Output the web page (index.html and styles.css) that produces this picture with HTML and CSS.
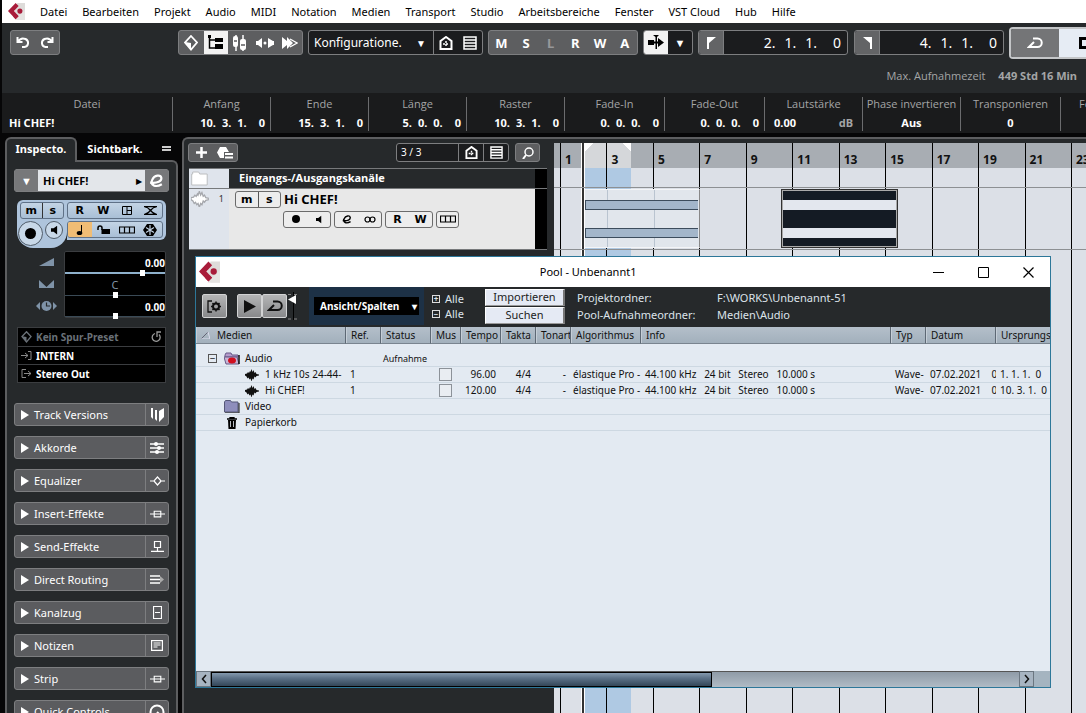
FILE: index.html
```
<!DOCTYPE html>
<html lang="de">
<head>
<meta charset="utf-8">
<title>Cubase – Unbenannt1</title>
<link rel="stylesheet" href="styles.css">
</head>
<body>
<svg class="defs" aria-hidden="true">
  <symbol id="logo" viewBox="0 0 20 20"><path d="M11 0h9v20h-9l-4-8z" fill="#dedcda"/><path d="M9 0L0 9.500 9 19l3.500-3.500L7 9.500 12.500 3.500z" fill="#a91c3a"/><path d="M8 20L20 8v12z" fill="#e6e4e2"/><path d="M9 19l3.500-3.500L10 13l-4 3z" fill="#a91c3a"/><circle cx="14" cy="9.500" r="3" fill="#a91c3a"/></symbol>
  <symbol id="house" viewBox="0 0 14 14"><path d="M1.500 5L7 1l5.500 4v8h-11z" fill="none" stroke="currentColor" stroke-width="2"/><path d="M7 5v6M4 8h6" stroke="currentColor" stroke-width="1.500" stroke-dasharray="2 1"/></symbol>
  <symbol id="list" viewBox="0 0 14 14"><path d="M1 1h12v12H1zM1 4h12M1 7h12M1 10h12" fill="none" stroke="currentColor" stroke-width="1.500"/></symbol>
  <symbol id="loop" viewBox="0 0 16 12"><path d="M6 1.500h4.500a4 4 0 0 1 0 8.500H2l5-5" fill="none" stroke="currentColor" stroke-width="2"/></symbol>
  <symbol id="wave" viewBox="0 0 14 12"><path d="M0 5l2-.5L3 3l1 1 1-2 .5 1L6.500 0l1 3L8.500 1l1 3 1-1 1 2 2.500.5v1l-2.500.5-1 1.500-1-1-1 3-1-1-1 3-1-3-1 1-1-2-1 1-1-2L0 6.500z" fill="currentColor"/></symbol>
  <symbol id="speaker" viewBox="0 0 8 10"><path d="M0 3h3l4-3v10L3 7H0z" fill="currentColor"/></symbol>
  <symbol id="lanes" viewBox="0 0 16 8"><path d="M.5 1h15v6H.5zM5.500 1v6M10.500 1v6" fill="none" stroke="currentColor" stroke-width="1.200"/></symbol>
  <symbol id="edit" viewBox="0 0 14 12"><path d="M1 7.500C8 8.500 12 6 11.500 3S5 0 3 5s3 7.500 9 4" fill="none" stroke="currentColor" stroke-width="2"/></symbol>
  <symbol id="insert" viewBox="0 0 16 10"><path d="M0 5h16M4.500 2h7v6h-7z" fill="none" stroke="currentColor" stroke-width="1.200"/></symbol>
  <symbol id="diamond" viewBox="0 0 14 16"><path d="M7 1l6 6.500-6 7-6-7z" fill="none" stroke="currentColor" stroke-width="1.800"/><path d="M1 7l6 1v7z" fill="currentColor"/></symbol>
</svg>

<nav class="menu">
  <svg class="menu-logo"><use href="#logo"/></svg>
  <a href="#">Datei</a><a href="#">Bearbeiten</a><a href="#">Projekt</a><a href="#">Audio</a><a href="#">MIDI</a><a href="#">Notation</a><a href="#">Medien</a><a href="#">Transport</a><a href="#">Studio</a><a href="#">Arbeitsbereiche</a><a href="#">Fenster</a><a href="#">VST Cloud</a><a href="#">Hub</a><a href="#">Hilfe</a>
</nav>

<header class="top">
  <div class="toolbar">
    <div class="group g50">
      <button aria-label="Rückgängig"><svg width="14" height="13" viewBox="0 0 14 13"><path d="M1.500 1v5h5M2 5.500C4 2.500 7 2 9.500 3c4 2 3 7.500-1 8H6" fill="none" stroke="currentColor" stroke-width="2"/></svg></button>
      <button aria-label="Wiederholen"><svg width="14" height="13" viewBox="0 0 14 13"><path d="M12.500 1v5h-5M12 5.500C10 2.500 7 2 4.500 3c-4 2-3 7.500 1 8H8" fill="none" stroke="currentColor" stroke-width="2"/></svg></button>
    </div>
    <div class="group zones">
      <button aria-label="Projektzone"><svg width="14" height="16"><use href="#diamond"/></svg></button>
      <button class="on" aria-label="Inspector"><svg width="16" height="16" viewBox="0 0 16 16"><path d="M1.500 0v13H7M1.500 5H7" fill="none" stroke="currentColor" stroke-width="1.500"/><path d="M0 0h3v3H0zM7 3h8v4H7zM7 9h8v5H7z" fill="currentColor"/></svg></button>
      <button aria-label="Mixer"><svg width="14" height="16" viewBox="0 0 14 16"><path d="M3 0v16M10 0v16" stroke="currentColor" stroke-width="1.500"/><rect x="0" y="1" width="5" height="11" rx="2" fill="currentColor"/><rect x="7" y="4" width="6" height="11" rx="2" fill="currentColor"/><path d="M1 6h3M8 10h4" stroke="#5d5e60" stroke-width="1.500"/></svg></button>
      <button aria-label="Audio"><svg width="18" height="10" viewBox="0 0 18 10"><path d="M0 3h2l4-3v10L2 7H0zM18 3h-1l-5-3v10l5-3h1z" fill="currentColor"/><circle cx="9" cy="5" r="1.500" fill="currentColor"/></svg></button>
      <button aria-label="Scrub"><svg width="16" height="12" viewBox="0 0 16 12"><path d="M0 0l5 4V0l6 6-6 6V8l-5 4z" fill="currentColor"/><path d="M8 2l7 4-7 4" fill="none" stroke="currentColor" stroke-width="1.300"/></svg></button>
    </div>
    <div class="group dark g175">
      <button class="config">Konfiguratione. <span>▼</span></button>
      <button class="sep" aria-label="Sichtbarkeit"><svg width="14" height="14"><use href="#house"/></svg></button>
      <button aria-label="Liste"><svg width="14" height="14"><use href="#list"/></svg></button>
    </div>
    <div class="group letters">
      <button>M</button><button>S</button><button class="dim">L</button><button>R</button><button>W</button><button>A</button>
    </div>
    <div class="group dark g50">
      <button class="on" aria-label="Auto-Scroll"><svg width="16" height="16" viewBox="0 0 16 16"><path d="M5 0h6L9 2v12h-1.500V2zM0 5h6v5H0zM10 3l6 4.500-6 4.500z" fill="currentColor"/><path d="M6 7.500h5" stroke="currentColor" stroke-width="2"/></svg></button>
      <button aria-label="Menü">▼</button>
    </div>
    <div class="group dark time">
      <button class="grey" aria-label="Linker Locator"><svg width="9" height="12" viewBox="0 0 9 12"><path d="M0 0h9L2 6v6H0z" fill="currentColor"/></svg></button>
      <div class="digits"><span>2.</span><span>1.</span><span>1.</span><span>0</span></div>
    </div>
    <div class="group dark time">
      <button class="grey" aria-label="Rechter Locator"><svg width="9" height="12" viewBox="0 0 9 12"><path d="M9 0H0l7 6v6h2z" fill="currentColor"/></svg></button>
      <div class="digits"><span>4.</span><span>1.</span><span>1.</span><span>0</span></div>
    </div>
    <div class="transport">
      <button class="cycle" aria-label="Cycle"><svg width="16" height="12"><use href="#loop"/></svg></button>
      <button class="stop" aria-label="Stop"><i></i></button>
    </div>
  </div>
  <div class="rectime"><span>Max. Aufnahmezeit</span><b>449 Std 16 Min</b></div>
</header>

<section class="info">
  <div class="file"><span>Datei</span><b class="left">Hi CHEF!</b></div>
  <div><span>Anfang</span><b class="pos"><i>10.</i><i>3.</i><i>1.</i><i>0</i></b></div>
  <div><span>Ende</span><b class="pos"><i>15.</i><i>3.</i><i>1.</i><i>0</i></b></div>
  <div><span>Länge</span><b class="pos"><i>5.</i><i>0.</i><i>0.</i><i>0</i></b></div>
  <div><span>Raster</span><b class="pos"><i>10.</i><i>3.</i><i>1.</i><i>0</i></b></div>
  <div class="wide"><span>Fade-In</span><b class="pos"><i>0.</i><i>0.</i><i>0.</i><i>0</i></b></div>
  <div class="wide"><span>Fade-Out</span><b class="pos"><i>0.</i><i>0.</i><i>0.</i><i>0</i></b></div>
  <div><span>Lautstärke</span><b class="gain">0.00<em>dB</em></b></div>
  <div><span>Phase invertieren</span><b>Aus</b></div>
  <div class="wide"><span>Transponieren</span><b>0</b></div>
  <div class="fine"><span>Fe</span></div>
</section>

<main class="work">
  <aside class="inspector">
    <div class="tabs"><button class="tab active">Inspecto.</button><button class="tab">Sichtbark.</button><button class="burger" aria-label="Menü"></button></div>
    <div class="panel">
      <div class="track-head"><button aria-label="Auf">▼</button><strong>Hi CHEF!</strong><span class="arrow">▶</span><button aria-label="Bearbeiten"><svg width="15" height="14"><use href="#edit"/></svg></button></div>

      <div class="blue">
        <div class="blue-left">
          <div class="pill"><button>m</button><button>s</button></div>
          <div class="rounds"><button class="rec" aria-label="Aufnahme"><i></i></button><button class="mon" aria-label="Monitor"><svg width="7" height="10"><use href="#speaker"/></svg></button></div>
        </div>
        <div class="blue-right">
          <div class="pill"><button>R</button><button>W</button>
            <button aria-label="Spuren"><svg width="10" height="9" viewBox="0 0 10 9"><path d="M.5.5h9v8h-9zM5 .5v8M5 4.500h4" fill="none" stroke="currentColor"/></svg></button>
            <button aria-label="Fades"><svg width="13" height="9" viewBox="0 0 13 9"><path d="M0 .7h13M0 8.300h13M1 8C6 8 7 1 12 1M1 1c5 0 6 7 11 7" fill="none" stroke="currentColor" stroke-width="1.200"/></svg></button></div>
          <div class="pill"><button class="orange" aria-label="Zeitbasis"><svg width="7" height="10" viewBox="0 0 7 10"><path d="M5.500 0v8" stroke="currentColor"/><ellipse cx="3.500" cy="8" rx="2.800" ry="2" fill="currentColor"/></svg></button>
            <button aria-label="Sperren"><svg width="13" height="9" viewBox="0 0 13 9"><path d="M1 5V3a2 2 0 0 1 4 0v2" fill="none" stroke="currentColor" stroke-width="1.500"/><path d="M4.500 4H13v5H4.500z" fill="currentColor"/></svg></button>
            <button aria-label="Lanes"><svg width="16" height="8"><use href="#lanes"/></svg></button>
            <button aria-label="Einfrieren"><svg width="14" height="12" viewBox="0 0 14 12"><path d="M4 0h6l4 6-4 6H4L0 6z" fill="currentColor"/><path d="M7 1v10M3 3.500l8 5M11 3.500l-8 5" stroke="#bfd0e2" stroke-width="1.200"/></svg></button></div>
        </div>
      </div>

      <div class="levels">
        <div class="level-icons">
          <svg width="15" height="8" viewBox="0 0 15 8"><path d="M0 8L15 0v8z" fill="#7f93a8"/></svg>
          <svg width="15" height="8" viewBox="0 0 15 8"><path d="M0 0l7.500 7L15 0v8H0z" fill="#7f93a8"/></svg>
          <svg width="21" height="10" viewBox="0 0 21 10"><path d="M4 1v8L0 5zM17 1v8l4-4z" fill="#7f93a8"/><circle cx="10.500" cy="5" r="5" fill="#7f93a8"/><path d="M10.500 1.500V5H14" fill="none" stroke="#26292b" stroke-width="1.200"/></svg>
        </div>
        <div class="level-box">
          <div class="fader volume"><b>0.00</b><i></i></div>
          <div class="fader pan"><span>C</span><i></i></div>
          <div class="fader delay"><b>0.00</b><i></i></div>
        </div>
      </div>

      <ul class="routing">
        <li class="muted"><svg width="11" height="12"><use href="#diamond"/></svg><b>Kein Spur-Preset</b><svg class="reload" width="11" height="12" viewBox="0 0 11 12"><path d="M4 2.500a4 4 0 1 0 4 1M6 6V1h4" fill="none" stroke="currentColor" stroke-width="1.300"/></svg></li>
        <li><svg width="11" height="9" viewBox="0 0 11 9"><path d="M0 4.500h7M4 2l3 2.500L4 7M7 .5h3v8H7" fill="none" stroke="#888" /></svg><b>INTERN</b></li>
        <li><svg width="11" height="9" viewBox="0 0 11 9"><path d="M3 4.500h7M7 2l3 2.500L7 7M5 .5H1v8h4" fill="none" stroke="#888"/></svg><b>Stereo Out</b></li>
      </ul>

      <div class="sections">
        <button><span>Track Versions</span><i><svg width="15" height="14" viewBox="0 0 15 14"><path d="M1 0h2v11L1 9zM5 2h2v11l-2-2zM9 3l5-3v9l-5 5z" fill="currentColor"/></svg></i></button>
        <button><span>Akkorde</span><i><svg width="14" height="12" viewBox="0 0 14 12"><path d="M0 2h14M0 6h14M0 10h14" stroke="currentColor" stroke-width="1.300"/><circle cx="6" cy="2" r="2" fill="currentColor"/><circle cx="9" cy="6" r="2" fill="currentColor"/><circle cx="7" cy="10" r="2" fill="currentColor"/></svg></i></button>
        <button><span>Equalizer</span><i><svg width="15" height="10" viewBox="0 0 15 10"><path d="M0 5h4l3.500-4L11 5h4M4 5l3.500 4L11 5" fill="none" stroke="currentColor" stroke-width="1.200"/></svg></i></button>
        <button><span>Insert-Effekte</span><i><svg width="15" height="10"><use href="#insert"/></svg></i></button>
        <button><span>Send-Effekte</span><i><svg width="13" height="11" viewBox="0 0 13 11"><path d="M3.500.5h6v6h-6zM6.500 6.500v4M0 10.300h13" fill="none" stroke="currentColor" stroke-width="1.200"/></svg></i></button>
        <button><span>Direct Routing</span><i><svg width="14" height="9" viewBox="0 0 14 9"><path d="M0 1h10M0 4.500h12M0 8h10" stroke="currentColor" stroke-width="1.300"/><path d="M10 1l4 3.500L10 8z" fill="#aaa"/></svg></i></button>
        <button><span>Kanalzug</span><i><svg width="9" height="13" viewBox="0 0 9 13"><path d="M.5.5h8v12h-8zM2 6.500h5" fill="none" stroke="currentColor" stroke-width="1.200"/></svg></i></button>
        <button><span>Notizen</span><i><svg width="12" height="11" viewBox="0 0 12 11"><path d="M.6.6h10.800v9.800H.6zM2.500 3h7M2.500 5h7M2.500 7h4" fill="none" stroke="currentColor" stroke-width="1.200"/></svg></i></button>
        <button><span>Strip</span><i><svg width="15" height="10"><use href="#insert"/></svg></i></button>
        <button><span>Quick Controls</span><i><svg width="16" height="16" viewBox="0 0 16 16"><circle cx="8" cy="8" r="6.500" fill="none" stroke="currentColor" stroke-width="2"/><path d="M8 8l4 4" stroke="currentColor" stroke-width="2"/></svg></i></button>
      </div>
    </div>
  </aside>

  <section class="project">
    <div class="tracks">
      <div class="track-tools">
        <div class="group g50"><button aria-label="Spur hinzufügen"><svg width="11" height="11" viewBox="0 0 11 11"><path d="M5.500 0v11M0 5.500h11" stroke="currentColor" stroke-width="2.500"/></svg></button><button aria-label="Preset"><svg width="16" height="12" viewBox="0 0 16 12"><path d="M3 0h6l3 5H7v6H3L0 5.500z" fill="currentColor"/><path d="M8 7h8M8 10.500h8" stroke="currentColor" stroke-width="2"/></svg></button></div>
        <div class="group dark filter"><span class="count">3 / 3</span><button class="sep" aria-label="Sichtbarkeit"><svg width="13" height="13"><use href="#house"/></svg></button><button class="sep" aria-label="Liste"><svg width="13" height="13"><use href="#list"/></svg></button></div>
        <div class="group find"><button aria-label="Suchen"><svg width="12" height="12" viewBox="0 0 12 12"><circle cx="7" cy="5" r="4" fill="none" stroke="currentColor" stroke-width="1.500"/><path d="M4 8l-3 4" stroke="currentColor" stroke-width="2"/></svg></button></div>
      </div>
      <div class="track folder"><div class="gutter"><svg width="17" height="15" viewBox="0 0 17 15"><path d="M.7 13V3h1V1h6l1 2h7.500v11H.7z" fill="#fff" stroke="#bcbec0"/></svg></div><strong>Eingangs-/Ausgangskanäle</strong></div>
      <div class="track audio">
        <div class="gutter"><svg class="track-wave" width="18" height="16"><use href="#wave"/></svg><span>1</span></div>
        <div class="track-body">
          <div class="row"><div class="pill"><button>m</button><button>s</button></div><strong>Hi CHEF!</strong></div>
          <div class="row second">
            <div class="pill"><button aria-label="Aufnahme"><i class="dot"></i></button><button aria-label="Monitor"><svg width="6" height="9"><use href="#speaker"/></svg></button></div>
            <div class="pill"><button aria-label="Bearbeiten"><svg width="10" height="9"><use href="#edit"/></svg></button><button aria-label="Stereo"><svg width="12" height="7" viewBox="0 0 12 7"><circle cx="3.500" cy="3.500" r="2.500" fill="none" stroke="currentColor" stroke-width="1.200"/><circle cx="8.500" cy="3.500" r="2.500" fill="none" stroke="currentColor" stroke-width="1.200"/></svg></button></div>
            <div class="pill"><button>R</button><button>W</button></div>
            <div class="pill"><button class="one" aria-label="Lanes"><svg width="16" height="8"><use href="#lanes"/></svg></button></div>
          </div>
        </div>
      </div>
    </div>

    <div class="timeline">
      <div class="lane first"></div><div class="lane second"></div>
      <div class="range"></div>
      <div class="bars"><span>1</span><span>3</span><span>5</span><span>7</span><span>9</span><span>11</span><span>13</span><span>15</span><span>17</span><span>19</span><span>21</span><span class="last">23</span></div>
      <div class="cursor"></div>
      <div class="clip light"><i></i><i></i></div>
      <div class="clip selected"><i></i><i></i></div>
    </div>
  </section>
</main>

<section class="pool">
  <div class="title">
    <svg class="pool-logo"><use href="#logo"/></svg>
    <h1>Pool - Unbenannt1</h1>
    <div class="win-buttons">
      <button aria-label="Minimieren"><svg width="11" height="11" viewBox="0 0 11 11"><path d="M0 5.500h11" stroke="#000"/></svg></button>
      <button aria-label="Maximieren"><svg width="11" height="11" viewBox="0 0 11 11"><path d="M.5.5h10v10H.5z" fill="none" stroke="#000"/></svg></button>
      <button aria-label="Schließen"><svg width="11" height="11" viewBox="0 0 11 11"><path d="M.5.5l10 10M10.500.5l-10 10" stroke="#000" stroke-width="1.200"/></svg></button>
    </div>
  </div>
  <div class="pool-tools">
    <button class="metal" aria-label="Einstellungen"><svg width="15" height="13" viewBox="0 0 15 13"><path d="M5 1H1v11h4" fill="none" stroke="#111" stroke-width="1.300"/><circle cx="9" cy="6.500" r="3" fill="none" stroke="#111" stroke-width="2"/><path d="M9 1.500v2M9 9.500v2M4 6.500h2M12 6.500h2M5.500 3l1.500 1.500M12.500 3L11 4.500M5.500 10L7 8.500M12.500 10L11 8.500" stroke="#111" stroke-width="1.500"/></svg></button>
    <div class="play"><button class="metal" aria-label="Wiedergabe"><svg width="12" height="13" viewBox="0 0 12 13"><path d="M0 0l12 6.500L0 13z" fill="#111"/></svg></button><button class="metal" aria-label="Loop"><svg width="16" height="12"><use href="#loop"/></svg></button></div>
    <svg class="slider" width="11" height="28" viewBox="0 0 11 28"><path d="M6.500 0v28" stroke="#000"/><path d="M1 2.500h9M1 27h9" stroke="#888" stroke-dasharray="3 3"/><path d="M9 3v9L1 7.500z" fill="#fff"/></svg>
    <div class="view"><button>Ansicht/Spalten <span>▾</span></button></div>
    <div class="all"><button><i>+</i>Alle</button><button><i>−</i>Alle</button></div>
    <div class="actions"><button>Importieren</button><button>Suchen</button></div>
    <dl><dt>Projektordner:</dt><dd>F:\WORKS\Unbenannt-51</dd><dt>Pool-Aufnahmeordner:</dt><dd>Medien\Audio</dd></dl>
  </div>
  <div class="pool-list">
    <table>
      <colgroup><col class="w150"><col class="w35"><col class="w50"><col class="w30"><col class="w40"><col class="w35"><col class="w35"><col class="w70"><col class="w250"><col class="w35"><col class="w70"><col></colgroup>
      <thead><tr><th class="media"><svg width="9" height="7" viewBox="0 0 9 7"><path d="M0 7l7-7" stroke="#667"/><path d="M7 0l2 7H0" fill="none" stroke="#dde"/></svg>Medien</th><th>Ref.</th><th>Status</th><th>Mus</th><th>Tempo</th><th>Takta</th><th>Tonart</th><th>Algorithmus</th><th>Info</th><th>Typ</th><th>Datum</th><th>Ursprungs</th></tr></thead>
      <tbody>
        <tr class="spacer"><td colspan="12"></td></tr>
        <tr><td><div class="node root"><i class="fold">−</i><svg width="16" height="13" viewBox="0 0 16 13"><path d="M1 3l1-2h5l1 2h6v2H1z" fill="#b49bcb" stroke="#665a88"/><path d="M0 5h13l2 7H2z" fill="#cbb4d4" stroke="#665a88"/><path d="M15 3v9" stroke="#111" stroke-width="1.500"/><ellipse cx="8" cy="8.500" rx="4" ry="3" fill="#d01020"/></svg>Audio</div></td><td></td><td class="small">Aufnahme</td><td colspan="9"></td></tr>
        <tr><td><div class="node leaf"><svg width="14" height="12"><use href="#wave"/></svg>1 kHz 10s 24-44-</div></td><td>1</td><td></td><td><input type="checkbox" aria-label="Musik-Modus 1"></td><td class="num">96.00</td><td class="num">4/4</td><td class="num">-</td><td class="algo">élastique Pro -</td><td class="pre">44.100 kHz   24 bit   Stereo   10.000 s</td><td>Wave-</td><td class="pre">07.02.2021    0</td><td class="pre">1. 1. 1.  0</td></tr>
        <tr><td><div class="node leaf"><svg width="14" height="12"><use href="#wave"/></svg>Hi CHEF!</div></td><td>1</td><td></td><td><input type="checkbox" aria-label="Musik-Modus 2"></td><td class="num">120.00</td><td class="num">4/4</td><td class="num">-</td><td class="algo">élastique Pro -</td><td class="pre">44.100 kHz   24 bit   Stereo   10.000 s</td><td>Wave-</td><td class="pre">07.02.2021    0</td><td class="pre">10. 3. 1.  0</td></tr>
        <tr><td><div class="node"><svg width="16" height="13" viewBox="0 0 16 13"><path d="M.5 12V2l1-1.500h5L7.500 2H14v10z" fill="#8e8ebc" stroke="#555878"/><path d="M15 3v10H1" fill="none" stroke="#111"/></svg>Video</div></td><td colspan="11"></td></tr>
        <tr><td><div class="node"><svg width="16" height="12" viewBox="0 0 16 12"><path d="M3 2h10M6 2V.7h4V2" fill="none" stroke="#000" stroke-width="1.300"/><path d="M4 3h8l-.5 9h-7z" fill="#000"/><path d="M6.500 4v6M9.500 4v6" stroke="#e3eaf2" stroke-width=".8"/></svg>Papierkorb</div></td><td colspan="11"></td></tr>
      </tbody>
    </table>
  </div>
  <div class="scroll"><button aria-label="Nach links"><svg width="6" height="10" viewBox="0 0 6 10"><path d="M5 1L1.500 5 5 9" fill="none" stroke="#111" stroke-width="1.500"/></svg></button><div class="trough"><div class="thumb"></div></div><button aria-label="Nach rechts"><svg width="6" height="10" viewBox="0 0 6 10"><path d="M1 1l3.500 4L1 9" fill="none" stroke="#111" stroke-width="1.500"/></svg></button></div>
</section>
</body>
</html>
```
FILE: styles.css
```
* { box-sizing: border-box; }
body { margin: 0; height: 100vh; padding-left: 2px; overflow: hidden; display: flex; flex-direction: column; position: relative; background: #060607; color: #fff; font: 11px/16px "Noto Sans", "Open Sans", sans-serif; }
button { font: inherit; color: inherit; background: none; border: 0; padding: 0; margin: 0; display: flex; align-items: center; justify-content: center; }
svg { flex: none; display: block; }
i { font-style: normal; }
.defs { position: absolute; width: 0; height: 0; }

/* Menu */
.menu { flex: none; height: 23px; background: #fff; display: flex; align-items: center; gap: 15px; padding-left: 6px; white-space: nowrap; }
.menu a { color: #000; text-decoration: none; }
.menu-logo { width: 17px; height: 17px; }

/* Toolbar */
.top { flex: none; height: 70px; background: #26292b; overflow: hidden; }
.toolbar { display: flex; align-items: center; gap: 5px; height: 39px; padding-left: 8px; }
.group { flex: none; display: flex; height: 25px; border: 1px solid #7d7e80; border-radius: 3px; background: #5d5e60; overflow: hidden; }
.group button { flex: 1 1 0; height: 100%; }
.group.dark { background: #1b1c1e; }
.group .on { background: #f2f2f2; color: #000; }
.group .sep { border-left: 1px solid #7d7e80; }
.g50 { width: 50px; }
.g175 { width: 175px; }
.zones { width: 125px; margin-left: 113px; }
.group .config { flex: none; width: 124px; font-size: 12px; justify-content: space-between; padding: 0 7px 0 5px; }
.config span { font-size: 10px; }
.letters { width: 150px; font: bold 13px/16px "Noto Sans", sans-serif; }
.dim { color: #97989a; }
.group .grey { flex: none; width: 25px; background: #636466; border-right: 1px solid #7d7e80; }
.time { width: 150px; }
.time + .time { margin-left: 1px; }
.digits { flex: 1; display: flex; justify-content: flex-end; align-items: center; gap: 9px; padding-right: 6px; font-size: 14px; }
.digits span:last-child { margin-left: 7px; }
.transport { flex: 1 0 90px; display: flex; height: 32px; border: 2px solid #c4c6c8; border-radius: 4px; overflow: hidden; }
.cycle { width: 48px; background: #747577; }
.transport .stop { flex: 1; background: #e6ecf4; justify-content: flex-start; padding-left: 20px; }
.stop i { width: 12px; height: 12px; border: 3px solid #000; flex: none; }
.rectime { display: flex; justify-content: flex-end; gap: 13px; padding: 6px 9px 0 0; color: #a4a5a6; }
.rectime span, .info span { font-family: "Open Sans", sans-serif; }

/* Info line */
.info { flex: none; height: 40px; background: #1a1b1c; display: flex; text-align: center; overflow: hidden; }
.info > div { flex: none; width: 98px; border-left: 1px solid #6b6c6e; margin: 4px 0 2px; line-height: 14px; }
.info > .file { width: 170px; border: 0; }
.info > .wide { width: 100px; }
.info > .fine { flex: 1 0 25px; padding-left: 18px; text-align: left; overflow: hidden; }
.info span { display: block; color: #a4a5a6; }
.info b { display: block; margin-top: 5px; padding: 0 5px; }
.info .left { text-align: left; padding-left: 7px; }
.info .pos { display: flex; justify-content: flex-end; gap: 6px; padding-left: 0; }
.pos i:last-child { margin-left: 6px; }
.info .gain { display: flex; justify-content: space-between; padding: 0 9px; }
.gain em { font-style: normal; color: #a4a5a6; }

.work { flex: 1; min-height: 0; display: flex; padding: 4px 0 0 3px; gap: 4px; }

/* Inspector */
.inspector { flex: none; width: 173px; display: flex; flex-direction: column; }
.tabs { flex: none; display: flex; height: 23px; position: relative; z-index: 1; }
.tab { width: 72px; font-weight: bold; }
.tab.active { height: 25px; background: #26292b; border: 2px solid #5d5e60; border-bottom: 0; border-radius: 6px 6px 0 0; padding-bottom: 4px; }
.tab:nth-child(2) { width: 76px; }
.burger { width: 9px; height: 5px; border: solid #ccc; border-width: 2px 0; margin: 9px 0 0 9px; }
.panel { flex: 1; min-height: 0; overflow: hidden; border: 2px solid #5d5e60; border-bottom: 0; border-radius: 0 6px 0 0; background: #26292b; padding: 7px 7px 0; }
.track-head { display: flex; height: 23px; align-items: stretch; border: 1px solid #7d7e80; border-radius: 3px; background: #e3e6ea; color: #000; }
.track-head button { width: 23px; background: #77787a; color: #fff; }
.track-head strong { flex: 1; padding: 3px 0 0 5px; font-family: "Open Sans", sans-serif; }
.track-head .arrow { font-size: 8px; padding: 3px 3px 0 0; }
.pill { display: flex; border: 1px solid #5f7187; border-radius: 3px; font: bold 11px/13px "DejaVu Sans", sans-serif; overflow: hidden; }
.pill button { flex: 1; height: 100%; }
.blue { display: flex; margin: 8px 3px 0; color: #000; }
.blue-left { width: 50px; background: #aec4dc; border-radius: 6px 0 16px 16px; padding: 2px 3px; height: 48px; }
.blue-right { flex: 1; background: #aec4dc; border-radius: 0 6px 6px 0; padding: 2px 3px 2px 0; height: 40px; }
.blue .pill { height: 17px; background: linear-gradient(#c3d4e5, #a9bfd6); }
.blue-left .pill button + button { border-left: 1px solid #333; }
.blue-right .pill + .pill { margin-top: 2px; }
.orange { background: #f0bd75; }
.rounds { display: flex; gap: 2px; margin-top: 2px; }
.rounds button { border: 1px solid #4f5b68; border-radius: 50%; background: #c8d8e8; flex: none; }
.rounds .rec { width: 25px; height: 25px; margin-left: -2px; }
.mon { width: 18px; height: 18px; }
.rec i { width: 11px; height: 11px; border-radius: 50%; background: #000; }
.levels { display: flex; justify-content: flex-end; gap: 7px; margin: 3px 3px 0 0; }
.level-icons { display: grid; grid-template-rows: repeat(3, 22px); align-items: center; justify-items: center; }
.level-box { width: 102px; background: #000; border: 1px solid #3b3d40; border-radius: 2px; }
.fader { height: 22px; position: relative; text-align: right; border-bottom: 1px solid #3a4a56; line-height: 21px; }
.fader b { font-size: 10px; }
.fader i { position: absolute; width: 5px; height: 6px; background: #fff; bottom: -3px; left: 48px; }
.fader.pan { text-align: center; color: #8093a4; }
.fader.volume { border-bottom: 2px solid #8eb0cb; }
.fader.volume i { left: 75px; bottom: -4px; }
.fader.delay { height: 21px; }
.routing { list-style: none; margin: 9px 3px 0; padding: 0; background: #000; border: 1px solid #3b3d40; }
.routing li { display: flex; align-items: center; gap: 4px; height: 18px; padding: 0 3px; font-size: 10px; }
.routing li + li { border-top: 1px solid #3b3d40; }
.routing .muted { color: #6a7178; }
.routing .reload { margin-left: auto; color: #999; }
.sections { display: grid; gap: 10px; margin-top: 20px; }
.sections button { height: 23px; border: 1px solid #7d7e80; border-radius: 3px; background: #5b5c5f; justify-content: space-between; }
.sections span { flex: 1; text-align: left; display: flex; align-items: center; gap: 5px; white-space: nowrap; }
.sections span::before { content: ""; border: solid transparent; border-width: 5px 0 5px 8px; border-left-color: #fff; margin-left: 6px; }
.sections i { width: 23px; height: 100%; border-left: 1px solid #7d7e80; display: flex; align-items: center; justify-content: center; }

/* Track list */
.project { flex: 1; min-width: 0; display: flex; border: 2px solid #5d5e60; border-width: 2px 0 0 2px; border-radius: 6px 0 0 0; background: #26292b; padding: 4px 0 0 5px; overflow: hidden; }
.tracks { flex: none; width: 365px; padding-right: 7px; }
.track-tools { display: flex; height: 25px; margin: 0 7px 0 -1px; }
.track-tools .group { height: 19px; }
.filter { width: 113px; margin-left: auto; }
.find { width: 25px; margin-left: 6px; }
.count { width: 61px; padding-left: 4px; line-height: 17px; font-size: 10px; }
.track { display: flex; border-top: 1px solid #77797b; padding-right: 12px; background: linear-gradient(#000, #000) right / 12px 100% no-repeat; }
.track .gutter { flex: none; width: 40px; background: #dfe4ec; display: flex; padding: 2px 0 0 2px; }
.folder { height: 20px; }
.folder strong { flex: 1; background: #26292b; padding-left: 10px; line-height: 18px; font-family: "Open Sans", sans-serif; }
.audio { height: 62px; border-bottom: 1px solid #77797b; color: #000; }
.audio .gutter { justify-content: space-between; padding-right: 5px; }
.track-wave { color: #fff; stroke: #a5a7ac; stroke-width: 1px; }
.audio .gutter span { color: #333; font-size: 9px; }
.track-body { flex: 1; background: #e8e8e8; padding: 1px 6px; }
.row { display: flex; gap: 3px; align-items: center; height: 18px; }
.row strong { font-size: 13px; }
.row .pill { height: 17px; border-color: #6b6b6b; background: #ededed; }
.row .pill button { width: 23px; }
.row .pill .one { width: 21px; }
.row:first-child .pill button { width: 22px; }
.row:first-child .pill button + button { border-left: 1px solid #555; }
.row.second { margin: 2px 0 0 48px; }
.dot { width: 8px; height: 8px; border-radius: 50%; background: #000; }

/* Timeline */
.timeline { flex: 1; position: relative; background: #dce0e7; }
.bars { position: absolute; inset: 0; display: flex; padding-left: 6px; background: linear-gradient(90deg, #a8adb3 31px, transparent 31px 77px, #a8adb3 77px) 0 0 / 100% 25px no-repeat; }
.bars span { flex: 1; border-left: 1px solid #000; padding: 8px 0 0 4px; color: #111; font-weight: bold; font-size: 12px; line-height: 17px; }
.bars .last { flex: 0 0 15px; overflow: hidden; }
.range { position: absolute; top: 0; bottom: 0; left: 31px; width: 46px; background: #afc9e3; }
.range::before { content: ""; display: block; height: 25px; background: linear-gradient(135deg, #fff 6px, transparent 6px), linear-gradient(225deg, #fff 6px, transparent 6px), #d5d7da; }
.cursor { position: absolute; top: 0; bottom: 0; left: 27px; width: 4px; background: #333; border: solid #fff; border-width: 0 1px; }
.lane { position: absolute; left: 0; right: 0; height: 1px; background: #8d9093; z-index: 1; }
.lane.first { top: 44px; }
.lane.second { top: 106px; }
.clip { position: absolute; z-index: 2; top: 46px; height: 59px; display: flex; flex-direction: column; gap: 18px; padding-top: 9px; }
.clip i { height: 10px; }
.clip.light { left: 31px; width: 115px; border: solid #f4f5f7; border-width: 1px 0; border-right: 1px solid #888; padding: 10px 1px 0 0; background: linear-gradient(90deg, transparent 22px, #b9c4d0 22px 23px, transparent 23px 69px, #b9c4d0 69px 70px, transparent 70px), #e1e6ec; }
.clip.light i { background: #a3b6ca; border: 1px solid #3c4c5c; border-right: 0; }
.clip.selected { left: 227px; width: 117px; border: 1px solid #333; outline: 1px solid #aaa; outline-offset: -2px; background: #141b24; padding: 10px 1px 0; }
.clip.selected i { background: #e3e7ee; }

/* Pool window */
.pool { position: absolute; z-index: 5; left: 195px; right: 35px; top: 256px; bottom: 25px; display: flex; flex-direction: column; background: #e3eaf2; border: 1px solid #2d7799; color: #111; overflow: hidden; }
.title { flex: none; height: 30px; background: #fff; display: grid; grid-template-columns: 6fr auto 7fr; align-items: center; padding: 0 16px 0 3px; }
.pool-logo { width: 21px; height: 22px; }
.title h1 { margin: 0; font-size: 11px; font-weight: normal; color: #000; }
.win-buttons { display: flex; justify-content: flex-end; gap: 34px; }
.pool-tools { flex: none; height: 40px; display: flex; align-items: center; background: #26292b; color: #dde3ea; padding: 0 0 2px 6px; white-space: nowrap; }
.metal { width: 25px; height: 24px; border: 1px solid #d2d3d4; border-radius: 2px; background: linear-gradient(#b4b5b6, #88898b); color: #111; }
.play { display: flex; margin-left: 10px; }
.slider { margin-right: 11px; }
.view { width: 115px; height: 38px; background: #1d3146; padding: 10px 5px; }
.view button { width: 105px; height: 18px; background: #000; color: #fff; font: bold 10px/16px "Open Sans", sans-serif; justify-content: space-between; padding: 0 2px 0 6px; }
.all { display: grid; margin-left: 8px; width: 53px; }
.all button { justify-content: flex-start; gap: 5px; height: 15px; }
.all i { width: 8px; height: 8px; border: 1px solid #ddd; font-size: 8px; line-height: 5px; text-align: center; font-weight: bold; }
.actions { display: grid; gap: 1px; width: 80px; }
.actions button { height: 17px; background: #e5eaf4; color: #222; border: 1px solid #fff; border-right: 2px solid #777; border-bottom: 1px solid #999; }
.pool-tools dl { display: grid; grid-template-columns: 140px auto; row-gap: 1px; margin: 0 0 0 12px; }
.pool-tools dd { margin: 0; }
.pool-list { flex: 1; min-height: 0; overflow: hidden; }
table { width: 100%; table-layout: fixed; border-collapse: separate; border-spacing: 0; font-size: 10px; line-height: 15px; }
.w150 { width: 150px; } .w35 { width: 35px; } .w50 { width: 50px; } .w30 { width: 30px; } .w40 { width: 40px; } .w70 { width: 70px; } .w250 { width: 250px; }
th, td { padding: 0 0 0 4px; text-align: left; font-weight: normal; white-space: nowrap; overflow: hidden; height: 16px; }
th { background: linear-gradient(#b4bfca, #a2b0bc); border-right: 1px solid #5d6874; border-bottom: 1px solid #79848f; box-shadow: inset 1px 0 #c5ced7; padding: 1px 0 0 5px; }
th:last-child { border-right: 0; }
.media svg { display: inline-block; margin-right: 7px; }
td { border-bottom: 1px solid #cdd8e2; }
.spacer td { height: 7px; border: 0; }
td.num { text-align: right; padding-right: 5px; }
td.algo { padding-left: 2px; }
.pre { white-space: pre; }
td.small { font-size: 9px; padding-left: 2px; }
.node { display: flex; align-items: center; gap: 5px; padding-left: 24px; }
.node.root { padding-left: 8px; }
.node.leaf { padding-left: 45px; gap: 6px; }
.fold { width: 9px; height: 9px; border: 1px solid #555; line-height: 6px; text-align: center; margin-right: 2px; }
td input { appearance: none; display: block; width: 13px; height: 13px; margin: 0 0 0 4px; border: 1px solid #8c9299; background: #e9edf2; }
.scroll { flex: none; height: 16px; display: flex; background: #a5b4c0; padding-right: 16px; }
.scroll button { width: 15px; border: 1px solid #6b7680; background: #a7b4c1; }
.trough { flex: 1; background: linear-gradient(#8f9ba7, #b0bbc5); border-top: 1px solid #555; }
.thumb { width: 62%; height: 15px; border: 1px solid #000; background: linear-gradient(#8499ae, #5c7187 40%, #334658); }
```
